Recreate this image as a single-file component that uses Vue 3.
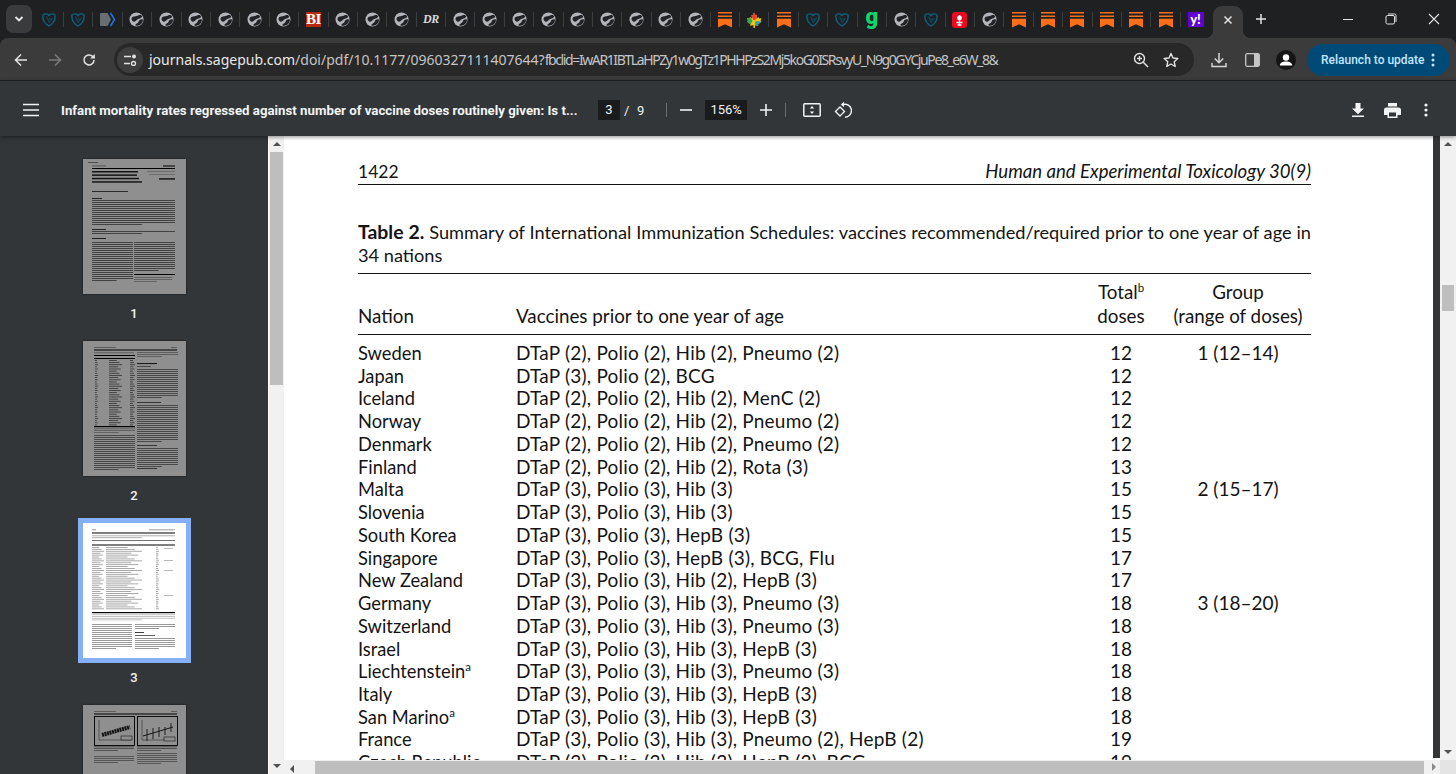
<script setup>
const tabs = [
  's','s','t','w','w','w','w','w','w','b','w','w','w','d','w','w','w','w','w','w','w','w','w','o','m','o','s','s','g','w','s','r','w','o','o','o','o','o','o','y'
]
const rows = [
  ['Sweden','', 'DTaP (2), Polio (2), Hib (2), Pneumo (2)','12','1 (12–14)'],
  ['Japan','', 'DTaP (3), Polio (2), BCG','12',''],
  ['Iceland','', 'DTaP (2), Polio (2), Hib (2), MenC (2)','12',''],
  ['Norway','', 'DTaP (2), Polio (2), Hib (2), Pneumo (2)','12',''],
  ['Denmark','', 'DTaP (2), Polio (2), Hib (2), Pneumo (2)','12',''],
  ['Finland','', 'DTaP (2), Polio (2), Hib (2), Rota (3)','13',''],
  ['Malta','', 'DTaP (3), Polio (3), Hib (3)','15','2 (15–17)'],
  ['Slovenia','', 'DTaP (3), Polio (3), Hib (3)','15',''],
  ['South Korea','', 'DTaP (3), Polio (3), HepB (3)','15',''],
  ['Singapore','', 'DTaP (3), Polio (3), HepB (3), BCG, Flu','17',''],
  ['New Zealand','', 'DTaP (3), Polio (3), Hib (2), HepB (3)','17',''],
  ['Germany','', 'DTaP (3), Polio (3), Hib (3), Pneumo (3)','18','3 (18–20)'],
  ['Switzerland','', 'DTaP (3), Polio (3), Hib (3), Pneumo (3)','18',''],
  ['Israel','', 'DTaP (3), Polio (3), Hib (3), HepB (3)','18',''],
  ['Liechtenstein','a', 'DTaP (3), Polio (3), Hib (3), Pneumo (3)','18',''],
  ['Italy','', 'DTaP (3), Polio (3), Hib (3), HepB (3)','18',''],
  ['San Marino','a', 'DTaP (3), Polio (3), Hib (3), HepB (3)','18',''],
  ['France','', 'DTaP (3), Polio (3), Hib (3), Pneumo (2), HepB (2)','19',''],
  ['Czech Republic','', 'DTaP (3), Polio (3), Hib (3), HepB (3), BCG','19','']
]
function lines(x, y, w, n, step, h = 0.7, o = 0.5) {
  const out = []
  for (let i = 0; i < n; i++) out.push({ x, y: y + i * step, w: i === n - 1 ? w * 0.6 : w, h, o })
  return out
}
function col(x, y, w, n, step, o = 0.6) {
  const out = []
  for (let i = 0; i < n; i++) out.push({ x, y: y + i * step, w: w * (0.6 + ((i * 7) % 5) / 10), h: 0.8, o })
  return out
}
const bar = (x, y, w, h = 0.8, o = 1) => ({ x, y, w, h, o })
const thumb1 = [
  bar(5, 3, 10, 1, 0.45), bar(9, 6.500, 14, 0.8, 0.5), bar(80, 6, 12, 2, 0.5),
  bar(9, 9, 83, 1, 1),
  ...lines(9, 12, 46, 4, 3.400, 1.500, 0.85).map((l, i) => ({ ...l, w: [46, 45, 47, 50][i] })),
  bar(64, 12, 28, 0.7, 0.35), bar(66, 15, 26, 0.7, 0.35), bar(76, 19, 16, 1.800, 0.7),
  bar(9, 32, 36, 1, 0.7),
  bar(9, 39, 10, 1, 0.75),
  ...lines(9, 41, 83, 13, 2, 0.9, 0.6),
  bar(9, 70, 14, 1, 0.75),
  ...lines(9, 72, 83, 2, 2, 0.9, 0.6),
  bar(9, 79, 14, 1, 0.8),
  ...lines(9, 83, 41, 20, 2, 0.9, 0.6),
  ...lines(51, 83, 41, 15, 2, 0.9, 0.6),
  bar(51, 115, 41, 1, 1),
  ...lines(51, 118, 38, 3, 2, 0.7, 0.45)
]
const thumb2 = [
  bar(11, 6, 22, 0.7, 0.5), bar(88, 6, 6, 0.7, 0.5),
  bar(11, 8.500, 83, 1, 1),
  bar(11, 11.500, 40, 0.7, 0.5), bar(11, 14, 41, 1, 1), bar(11, 17, 41, 1, 1),
  ...col(12, 19, 3, 31, 2.150, 0.65),
  ...col(26, 19, 13, 31, 2.150, 0.65),
  ...col(47, 19, 5, 31, 2.150, 0.65),
  bar(11, 85, 41, 1.200, 1),
  ...lines(11, 87.500, 41, 3, 1.800, 0.7, 0.45),
  ...lines(11, 94, 41, 18, 2, 0.9, 0.55),
  ...lines(54, 11, 41, 3, 2, 0.7, 0.5),
  bar(54, 22, 20, 1.100, 0.8), bar(54, 25, 14, 0.8, 0.6),
  ...lines(54, 28, 41, 15, 2, 0.9, 0.55),
  bar(54, 61, 24, 0.9, 0.7),
  ...lines(54, 64, 41, 19, 2, 0.9, 0.55),
  bar(54, 104, 20, 0.9, 0.7),
  ...lines(54, 107, 41, 10, 2, 0.9, 0.55),
  bar(54, 127, 20, 0.9, 0.7)
]
const thumb3 = [
  bar(9, 6.500, 4, 0.7, 0.6), bar(66, 6.500, 26, 0.7, 0.55),
  bar(9, 9.500, 83, 1, 1),
  ...lines(9, 12.500, 83, 2, 1.900, 0.7, 0.45),
  bar(9, 17, 83, 1, 0.55),
  bar(9, 21.500, 83, 1, 1),
  ...col(9, 24, 12, 33, 1.920, 0.42),
  ...col(23, 24, 36, 33, 1.920, 0.42),
  ...col(73, 24, 3, 33, 1.920, 0.42),
  bar(81, 25, 9, 0.7, 0.4), bar(81, 37, 9, 0.7, 0.4), bar(81, 47, 9, 0.7, 0.4), bar(81, 72, 9, 0.7, 0.4),
  bar(9, 89, 83, 1.200, 1),
  ...lines(9, 91.500, 83, 4, 1.700, 0.6, 0.4),
  ...lines(9, 101, 40, 13, 2, 0.8, 0.5),
  ...lines(52, 101, 40, 3, 2, 0.8, 0.5),
  bar(52, 109, 9, 0.9, 0.85), bar(52, 112, 20, 0.9, 0.7),
  ...lines(52, 115, 40, 6, 2, 0.8, 0.5)
]
const thumb4 = [
  bar(11, 6, 22, 0.7, 0.5), bar(88, 6, 6, 0.7, 0.5), bar(11, 8.500, 83, 1, 1),
  ...lines(11, 41.500, 40, 3, 1.800, 0.7, 0.6),
  ...lines(54, 41.500, 40, 3, 1.800, 0.7, 0.6),
  ...lines(11, 51, 40, 4, 2, 0.8, 0.5),
  ...lines(54, 48, 40, 6, 2, 0.8, 0.5)
]
</script>

<template>
  <div class="window">
    <div class="tabstrip">
      <button class="search-tabs">
        <svg width="10" height="8" viewBox="0 0 10 8"><path d="M1.500 2 5 5.500 8.500 2" fill="none" stroke="#e8eaed" stroke-width="1.800"/></svg>
      </button>
      <div class="tabs">
        <div v-for="(t, i) in tabs" :key="i" class="tab">
          <svg v-if="t === 'w'" width="15" height="15" viewBox="0 0 16 16"><circle cx="8" cy="8" r="7.500" fill="#b2b5b9"/><path d="M3 6.200C4.500 4.300 6.500 4.900 8.200 4.300c1.700-.5 3.200-1.400 4.900-.9l1 1.700c-1.500 2.200-4 1.900-5.600 3.100-1.300 1-1.700 2.400-3.600 2.100C3.200 10 2 7.500 3 6.200Z" fill="#202225"/><path d="M11.300 8.400c1.300-.7 2.600-.8 3.600-.4.100 2.400-1.100 4.500-2.900 5.700-1.700 1.100-3.800 1.300-5.100.8-.3-1.500 1.100-2.100 2.200-2.700 1.200-.7 1-2.500 2.200-3.400Z" fill="#202225"/></svg>
          <svg v-else-if="t === 's'" width="14" height="15" viewBox="0 0 14 15"><path d="M1 3C3 1.300 5.500 1.600 7 3.500 8.500 1.600 11 1.300 13 3c.6 4-1.500 8.300-6 11C2.500 11.300.4 7 1 3Z" fill="none" stroke="#0f607d" stroke-width="1.400"/><path d="M4.500 4.500 7.200 10.500 10.500 6M6.500 7h3" fill="none" stroke="#0e4a62" stroke-width="1.100"/></svg>
          <svg v-else-if="t === 't'" width="16" height="15" viewBox="0 0 16 15"><path d="M0 2a1 1 0 0 1 1-1h6.500L11 7.500 7.500 14H1a1 1 0 0 1-1-1Z" fill="#6a6d71"/><path d="M10.500 1 14.500 7.500l-4 6.500" fill="none" stroke="#1a73e8" stroke-width="1.600"/></svg>
          <span v-else-if="t === 'b'" class="fav-bi">BI</span>
          <span v-else-if="t === 'd'" class="fav-dr">DR</span>
          <svg v-else-if="t === 'o'" width="14" height="16" viewBox="0 0 14 16"><path d="M0 0h14v1.600H0Zm0 3.400h14v1.600H0ZM0 6.800h14v8.700L7 12.300 0 15.500Z" fill="#ff6f1a"/></svg>
          <svg v-else-if="t === 'm'" width="16" height="16" viewBox="0 0 16 16"><path d="M8 .5 9.800 3.500 11 3l-.5 3.500L12.500 5l.5 1.500 2.500-.2-1 2.700 1 .8-3.500 2.500.4 1.500-3.400-.6V16H7.500v-2.800l-3.400.6.400-1.500L1 9.800l1-.8L1 6.300l2.500.2L4 5l2 1.500L5.500 3l1.200.5Z" fill="#f2c21b"/><path d="M8 .5 9.800 3.500 11 3l-.5 3.500L9 8H7L5.500 3l1.200.5Z" fill="#e5402f"/><path d="M1 6.300l2.500.2L4 5l2.500 4-2 3.300L1 9.800l1-.8Z" fill="#2fa84f"/><path d="M9.500 9l6 .8-3.500 2.500.4 1.500L9 13Z" fill="#2a9fb5"/></svg>
          <span v-else-if="t === 'g'" class="fav-g">g</span>
          <svg v-else-if="t === 'r'" width="15" height="16" viewBox="0 0 15 16"><rect width="15" height="16" rx="3" fill="#ea0a1f"/><path d="M7.500 3v10M4.500 10.500h6M5.500 13h4" stroke="#fff" stroke-width="1.300" fill="none"/><circle cx="7.500" cy="6" r="2.400" fill="#fff"/></svg>
          <span v-else-if="t === 'y'" class="fav-y">y!</span>
        </div>
      </div>
      <div class="active-tab">
        <svg width="10" height="10" viewBox="0 0 10 10"><path d="M1.500 1.500l7 7m0-7-7 7" stroke="#e3e3e3" stroke-width="1.500"/></svg>
      </div>
      <div class="new-tab">
        <svg width="12" height="12" viewBox="0 0 12 12"><path d="M6 1v10M1 6h10" stroke="#e3e3e3" stroke-width="1.500"/></svg>
      </div>
      <div class="win-controls">
        <svg width="12" height="12" viewBox="0 0 12 12"><path d="M1 6.500h10" stroke="#e3e3e3"/></svg>
        <svg width="12" height="12" viewBox="0 0 12 12"><rect x="1" y="2.500" width="8.500" height="8.500" rx="1.500" fill="none" stroke="#e3e3e3"/><path d="M3 1h6.500A1.500 1.500 0 0 1 11 2.500V9" fill="none" stroke="#e3e3e3"/></svg>
        <svg width="12" height="12" viewBox="0 0 12 12"><path d="M1 1l10 10m0-10L1 11" stroke="#e3e3e3" stroke-width="1.100"/></svg>
      </div>
    </div>

    <div class="toolbar">
      <div class="nav">
        <svg width="14" height="14" viewBox="0 0 14 14"><path d="M13 7H2M7 1.500 1.500 7 7 12.500" fill="none" stroke="#e3e3e3" stroke-width="1.500"/></svg>
        <svg width="14" height="14" viewBox="0 0 14 14"><path d="M1 7h11M7 1.500 12.500 7 7 12.500" fill="none" stroke="#7b7b7b" stroke-width="1.500"/></svg>
        <svg width="14" height="14" viewBox="0 0 14 14"><path d="M12 7a5 5 0 1 1-1.500-3.600L12.500 5" fill="none" stroke="#e3e3e3" stroke-width="1.500"/><path d="M12.800 1v4.600H8.200Z" fill="#e3e3e3"/></svg>
      </div>
      <div class="omnibox">
        <span class="site-info">
          <svg width="14" height="12" viewBox="0 0 14 12"><path d="M1 2.500h7M1 9.500h6" stroke="#e3e3e3" stroke-width="1.500"/><circle cx="11" cy="2.500" r="2" fill="#e3e3e3"/><circle cx="10.500" cy="9.500" r="2" fill="none" stroke="#e3e3e3" stroke-width="1.300"/></svg>
        </span>
        <span class="url"><span class="host">journals.sagepub.com</span>/doi/pdf/10.1177/0960327111407644?<span class="query">fbclid=IwAR1IBTLaHPZy1w0gTz1PHHPzS2Mj5koG0ISRsvyU_N9g0GYCjuPe8_e6W_8&amp;</span></span>
        <svg class="ob-zoom" width="16" height="16" viewBox="0 0 16 16"><circle cx="6.500" cy="6.500" r="5" fill="none" stroke="#e3e3e3" stroke-width="1.400"/><path d="M10.300 10.300 15 15" stroke="#e3e3e3" stroke-width="1.500"/><path d="M6.500 4v5M4 6.500h5" stroke="#e3e3e3" stroke-width="1.300"/></svg>
        <svg class="ob-star" width="16" height="16" viewBox="0 0 16 16"><path d="M8 1.500 10 6l4.800.5-3.600 3.200 1 4.800L8 12l-4.200 2.500 1-4.800L1.200 6.500 6 6Z" fill="none" stroke="#e3e3e3" stroke-width="1.400" stroke-linejoin="round"/></svg>
      </div>
      <svg class="tb-dl" width="16" height="16" viewBox="0 0 16 16"><path d="M8 1v9.500M3.800 6.500 8 10.700l4.200-4.200M1 11v3.500h14V11" fill="none" stroke="#d5d5d5" stroke-width="1.500"/></svg>
      <svg class="tb-panel" width="15" height="14" viewBox="0 0 15 14"><rect x=".7" y=".7" width="13.600" height="12.600" rx="1.500" fill="none" stroke="#c7c7c7" stroke-width="1.300"/><rect x="9" y="1" width="5" height="12" fill="#c7c7c7"/></svg>
      <svg class="tb-profile" width="20" height="20" viewBox="0 0 20 20"><circle cx="10" cy="10" r="10" fill="#151515"/><circle cx="10" cy="7.500" r="3.200" fill="#fff"/><path d="M3.800 15.500c0-2.800 3-4 6.200-4s6.200 1.200 6.200 4Z" fill="#fff"/></svg>
      <div class="relaunch">
        <span class="relaunch-text">Relaunch to update</span>
        <svg width="4" height="14" viewBox="0 0 4 14"><circle cx="2" cy="2" r="1.500" fill="#c2e7ff"/><circle cx="2" cy="7" r="1.500" fill="#c2e7ff"/><circle cx="2" cy="12" r="1.500" fill="#c2e7ff"/></svg>
      </div>
    </div>

    <div class="pdfbar">
      <svg class="burger" width="16" height="14" viewBox="0 0 16 14"><path d="M0 1.500h16M0 7h16M0 12.500h16" stroke="#f1f3f4" stroke-width="1.600"/></svg>
      <span class="doc-title">Infant mortality rates regressed against number of vaccine doses routinely given: Is t...</span>
      <span class="page-input">3</span>
      <span class="slash">/</span>
      <span class="page-total">9</span>
      <span class="sep sep-a"></span>
      <svg class="minus" width="12" height="2" viewBox="0 0 12 2"><path d="M0 1h12" stroke="#f1f3f4" stroke-width="1.600"/></svg>
      <span class="zoom-input">156%</span>
      <svg class="plus" width="12" height="12" viewBox="0 0 12 12"><path d="M0 6h12M6 0v12" stroke="#f1f3f4" stroke-width="1.600"/></svg>
      <span class="sep sep-b"></span>
      <svg class="fit" width="18" height="14" viewBox="0 0 18 14"><rect x=".8" y=".8" width="16.400" height="12.400" rx="1" fill="none" stroke="#f1f3f4" stroke-width="1.500"/><path d="M9 3 6.800 5.500h4.400ZM9 11 6.800 8.500h4.400Z" fill="#f1f3f4"/></svg>
      <svg class="rotate" width="18" height="18" viewBox="0 0 18 18"><path d="M1.500 10.500 6 6l4.500 4.500L6 15Z" fill="none" stroke="#f1f3f4" stroke-width="1.400"/><path d="M9 3.500a6.500 6.500 0 1 1 2 12.700" fill="none" stroke="#f1f3f4" stroke-width="1.400"/><path d="M10 .8V6.200L6.800 3.500Z" fill="#f1f3f4"/></svg>
      <svg class="pdf-dl" width="14" height="14" viewBox="0 0 14 14"><path d="M4.500 0h5v5.500H13L7 11.200 1 5.500h3.500ZM1 12.600h12V14H1Z" fill="#f1f3f4"/></svg>
      <svg class="pdf-print" width="17" height="15" viewBox="0 0 17 15"><path d="M4 0h9v3.500H4ZM2.500 4.500h12A2.500 2.500 0 0 1 17 7v5h-3.500v3h-10v-3H0V7a2.500 2.500 0 0 1 2.500-2.500Zm2.500 5v4h7v-4Z" fill="#f1f3f4" fill-rule="evenodd"/></svg>
      <svg class="pdf-more" width="4" height="14" viewBox="0 0 4 14"><circle cx="2" cy="2" r="1.600" fill="#f1f3f4"/><circle cx="2" cy="7" r="1.600" fill="#f1f3f4"/><circle cx="2" cy="12" r="1.600" fill="#f1f3f4"/></svg>
    </div>

    <div class="main">
      <aside class="sidebar">
        <div class="thumb-wrap">
          <svg class="thumb dim" viewBox="0 0 103 135" width="103" height="135"><rect width="103" height="135" fill="#fff"/><rect v-for="(l, i) in thumb1" :key="i" :x="l.x" :y="l.y" :width="l.w" :height="l.h" :opacity="l.o" fill="#000"/></svg>
          <span class="thumb-num">1</span>
        </div>
        <div class="thumb-wrap">
          <svg class="thumb dim" viewBox="0 0 103 135" width="103" height="135"><rect width="103" height="135" fill="#fff"/><rect v-for="(l, i) in thumb2" :key="i" :x="l.x" :y="l.y" :width="l.w" :height="l.h" :opacity="l.o" fill="#000"/></svg>
          <span class="thumb-num">2</span>
        </div>
        <div class="thumb-wrap">
          <svg class="thumb sel" viewBox="0 0 103 135" width="103" height="135"><rect width="103" height="135" fill="#fff"/><rect v-for="(l, i) in thumb3" :key="i" :x="l.x" :y="l.y" :width="l.w" :height="l.h" :opacity="l.o" fill="#000"/></svg>
          <span class="thumb-num">3</span>
        </div>
        <div class="thumb-wrap">
          <svg class="thumb dim" viewBox="0 0 103 135" width="103" height="135">
            <rect width="103" height="135" fill="#fff"/>
            <rect v-for="(l, i) in thumb4" :key="i" :x="l.x" :y="l.y" :width="l.w" :height="l.h" :opacity="l.o" fill="#000"/>
            <rect x="11.500" y="11.500" width="40" height="29" fill="none" stroke="#000" stroke-width=".9"/>
            <rect x="54.500" y="11.500" width="40" height="29" fill="none" stroke="#000" stroke-width=".9"/>
            <path d="M16 15v20h32M59 15v20h32" fill="none" stroke="#333" stroke-width=".5"/>
            <path d="M19 30 47 22" stroke="#222" stroke-width="4" stroke-dasharray="2 .6"/>
            <path d="M60 31 90 22" stroke="#222" stroke-width="1"/>
            <path d="M64 24v12M70 23v11M76 22v10M82 22v8M88 18v9" stroke="#222" stroke-width=".9"/>
            <rect x="38" y="31" width="11" height="4" fill="#fff" stroke="#222" stroke-width=".6"/>
            <rect x="81" y="32" width="11" height="4" fill="#fff" stroke="#222" stroke-width=".6"/>
          </svg>
        </div>
      </aside>
      <div class="side-scroll">
        <span class="arrow up"></span>
        <span class="side-thumb"></span>
        <span class="arrow down"></span>
      </div>
      <div class="viewer">
        <div class="viewer-row">
          <div class="doc-clip">
            <div class="doc">
              <div class="running-head">
                <span class="folio">1422</span>
                <em>Human and Experimental Toxicology 30(9)</em>
              </div>
              <div class="caption">
                <div class="cap-line"><b>Table 2.</b> Summary of International Immunization Schedules: vaccines recommended/required prior to one year of age in</div>
                <div>34 nations</div>
              </div>
              <div class="thead">
                <span>Nation</span>
                <span>Vaccines prior to one year of age</span>
                <span class="ctr">Total<sup>b</sup><br>doses</span>
                <span class="ctr">Group<br>(range of doses)</span>
              </div>
              <div class="tbody">
                <div v-for="r in rows" :key="r[0]" class="row">
                  <span class="nation">{{ r[0] }}<sup v-if="r[1]">{{ r[1] }}</sup></span>
                  <span class="vax">{{ r[2] }}</span>
                  <span class="ctr">{{ r[3] }}</span>
                  <span class="ctr">{{ r[4] }}</span>
                </div>
              </div>
            </div>
          </div>
          <div class="v-divider"></div>
          <div class="right-scroll">
            <span class="arrow up"></span>
            <span class="right-thumb"></span>
            <span class="arrow down"></span>
          </div>
        </div>
        <div class="h-scroll">
          <span class="arrow left"></span>
          <span class="h-thumb"></span>
          <span class="arrow right"></span>
          <span class="corner"></span>
        </div>
      </div>
    </div>
  </div>
</template>

<style>
html, body { margin: 0; background: #323639; overflow: hidden; }
</style>

<style scoped>
.window { width: 1456px; height: 774px; display: flex; flex-direction: column; overflow: hidden; font-family: "Noto Sans", sans-serif; background: #1f2022; }

.tabstrip { height: 38px; flex: none; background: #1f2022; display: flex; align-items: flex-start; position: relative; }
.search-tabs { width: 26px; height: 28px; margin: 5px 0 0 6px; padding: 0; border: 0; border-radius: 7px; background: #3a3b3c; display: flex; align-items: center; justify-content: center; }
.tabs { display: flex; margin-left: 2.600px; margin-top: 12px; }
.tab { width: 29.400px; height: 15px; box-sizing: border-box; border-right: 1px solid #3d3e40; display: flex; align-items: center; justify-content: center; }
.tab:last-child { border-right: 0; }
.fav-bi { width: 15px; height: 15px; background: #b8260d; color: #fff; font: 700 15px/15px "Liberation Serif", serif; text-align: center; letter-spacing: -.5px; }
.fav-dr { color: #d8d8d8; font: italic 700 12px/15px "Liberation Serif", serif; letter-spacing: -.5px; }
.fav-g { color: #10d56f; font: 900 22px/14px "Roboto", sans-serif; position: relative; top: -3px; }
.fav-y { width: 16px; height: 15px; background: #5f01d1; color: #fff; font: 900 13px/15px "Lato", sans-serif; text-align: center; }
.active-tab { width: 30px; height: 32px; margin: 6px 0 0 3px; background: #3b3b3b; border-radius: 9px 9px 0 0; display: flex; align-items: center; justify-content: center; padding-bottom: 4px; box-sizing: border-box; position: relative; }
.active-tab::before, .active-tab::after { content: ""; position: absolute; bottom: 0; width: 8px; height: 8px; }
.active-tab::before { left: -8px; background: radial-gradient(circle at 0 0, transparent 8px, #3b3b3b 8.5px); }
.active-tab::after { right: -8px; background: radial-gradient(circle at 100% 0, transparent 8px, #3b3b3b 8.5px); }
.new-tab { margin: 13px 0 0 12px; line-height: 0; }
.win-controls { margin: 13px 0 0 auto; width: 98px; padding-right: 16px; display: flex; justify-content: space-between; }

.toolbar { height: 43px; flex: none; box-sizing: border-box; padding-top: 1px; background: #3b3b3b; display: flex; align-items: center; border-bottom: 1px solid #1f2022; border-radius: 8px 8px 0 0; }
.nav { width: 114px; box-sizing: border-box; padding: 0 18px 0 14px; display: flex; justify-content: space-between; }
.omnibox { width: 1080px; height: 33px; border-radius: 17px; background: #282828; display: flex; align-items: center; }
.site-info { width: 26px; height: 26px; margin-left: 3px; border-radius: 50%; background: #3e3e3e; display: flex; align-items: center; justify-content: center; flex: none; }
.url { margin-left: 6px; color: #c4c4c4; font-size: 14px; line-height: 30px; white-space: nowrap; width: 845px; flex: none; }
.host { color: #e8e8e8; }
.query { letter-spacing: -1.390px; }
.ob-zoom { margin-left: 139px; }
.ob-star { margin-left: 14px; }
.tb-dl { margin-left: 17px; }
.tb-panel { margin-left: 18px; }
.tb-profile { margin-left: 16px; }
.relaunch { width: 143px; height: 32px; margin-left: 11px; box-sizing: border-box; border-radius: 16px; background: #004a77; color: #c2e7ff; font: 500 12px/32px "Roboto", sans-serif; display: flex; align-items: center; padding-left: 14px; }
.relaunch-text { width: 110px; white-space: nowrap; }

.pdfbar { height: 55px; flex: none; box-sizing: border-box; padding-top: 3px; background: #323639; display: flex; align-items: center; color: #f1f3f4; position: relative; z-index: 2; box-shadow: 0 1px 4px rgba(0,0,0,.45); }
.burger { margin-left: 23px; }
.doc-title { margin-left: 22px; width: 516px; white-space: nowrap; font: 700 13.250px "Roboto", sans-serif; }
.page-input { margin-left: 21px; width: 22px; height: 20px; background: #191b1c; text-align: center; font: 13px/20px "Roboto", sans-serif; }
.slash { margin-left: 4px; font: 13px "Roboto", sans-serif; }
.page-total { margin-left: 7.500px; font: 13px "Roboto", sans-serif; }
.sep { width: 1px; height: 14px; background: #6b6f72; }
.sep-a { margin-left: 22px; }
.minus { margin-left: 13px; }
.zoom-input { margin-left: 13px; width: 42px; height: 20px; background: #191b1c; text-align: center; font: 13px/20px "Roboto", sans-serif; }
.plus { margin-left: 13px; }
.sep-b { margin-left: 13px; }
.fit { margin-left: 17px; }
.rotate { margin-left: 13px; }
.pdf-dl { margin-left: 499px; }
.pdf-print { margin-left: 19px; }
.pdf-more { margin-left: 23px; }

.main { flex: 1; display: flex; min-height: 0; }
.sidebar { width: 268px; flex: none; background: #323639; overflow: hidden; box-sizing: border-box; padding-top: 23px; display: flex; flex-direction: column; align-items: center; }
.thumb-wrap { display: flex; flex-direction: column; align-items: center; flex: none; }
.thumb { display: block; filter: blur(.25px); }
.thumb.dim { filter: blur(.25px) brightness(.56); box-shadow: 0 0 2px rgba(0,0,0,.7); }
.thumb.sel { outline: 5px solid #85b0f6; }
.thumb-num { height: 47px; color: #f1f3f4; font: 500 13px/40px "Roboto", sans-serif; }
.side-scroll { width: 16px; flex: none; box-sizing: border-box; border-left: 1px solid #fff; background: #f1f1f1; position: relative; }
.side-thumb { position: absolute; left: 1px; top: 16px; width: 13px; height: 233px; background: #bebebe; }
.arrow { position: absolute; width: 0; height: 0; border-style: solid; }
.arrow.up { top: 6px; left: 4px; border-width: 0 4px 4px; border-color: transparent transparent #505050; }
.arrow.down { bottom: 6px; left: 4px; border-width: 4px 4px 0; border-color: #505050 transparent transparent; }
.arrow.left { top: 5px; left: 6px; border-width: 4px 4px 4px 0; border-color: transparent #505050 transparent transparent; }
.arrow.right { top: 3px; right: 20px; border-width: 4px 0 4px 4px; border-color: transparent transparent transparent #8a8a8a; }

.viewer { flex: 1; min-width: 0; display: flex; flex-direction: column; background: #fff; }
.viewer-row { flex: 1; min-height: 0; display: flex; }
.doc-clip { flex: 1; overflow: hidden; background: #fff; }
.v-divider { width: 7px; flex: none; margin-bottom: 2px; background: #323639; }
.doc { width: 953px; margin-left: 74px; color: #141414; font-family: "Lato", sans-serif; font-size: 19px; padding-top: 22px; }
.running-head { display: flex; justify-content: space-between; align-items: baseline; height: 26px; line-height: 26px; border-bottom: 1.500px solid #111; font-size: 18.600px; }
.folio { font-size: 17.500px; }
.running-head em { font-style: italic; }
.caption { margin: 35px 0 0; line-height: 23px; padding-bottom: 6px; border-bottom: 1.500px solid #111; font-size: 18.200px; }
.cap-line { white-space: nowrap; text-align: justify; text-align-last: justify; }
.caption b { font-size: 19.400px; }
.thead { display: grid; grid-template-columns: 158px 1fr 88px 146px; padding-top: 6px; padding-bottom: 7px; border-bottom: 1.500px solid #111; line-height: 23.500px; align-items: end; font-size: 18.800px; }
.ctr { text-align: center; }
sup { font-size: 11.500px; line-height: 0; }
.tbody { padding-top: 7px; }
.row { display: grid; grid-template-columns: 158px 1fr 88px 146px; height: 22.740px; line-height: 22.740px; white-space: nowrap; }
.nation { font-size: 18.300px; }
.vax { letter-spacing: .22px; }

.h-scroll { height: 14px; flex: none; background: #f1f1f1; position: relative; }
.h-thumb { position: absolute; left: 31px; right: 32px; top: 1px; bottom: 0; background: #bebebe; }
.corner { position: absolute; right: 0; top: 0; bottom: 0; width: 16px; background: #e4e4e4; }
.right-scroll { width: 16px; flex: none; background: #f1f1f1; position: relative; }
.right-thumb { position: absolute; left: 2px; top: 149px; width: 12px; height: 26px; background: #bebebe; }
</style>
